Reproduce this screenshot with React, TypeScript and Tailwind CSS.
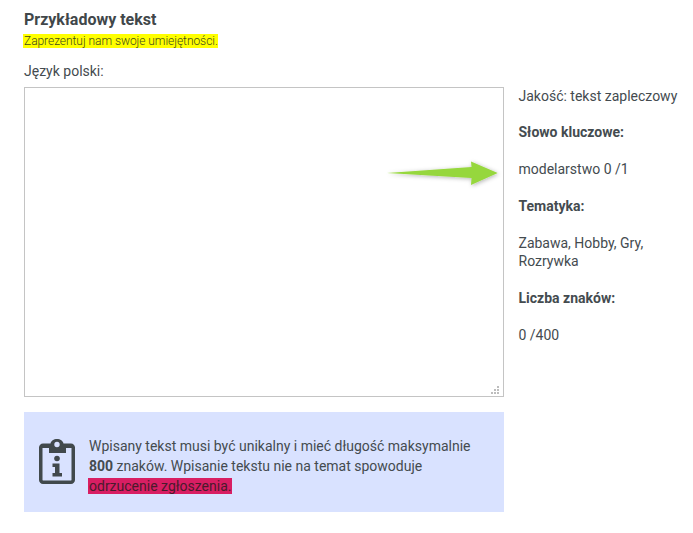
const App = () => {
  return (
    <div className="min-h-screen bg-white pl-6 pt-3 font-['Roboto',sans-serif] text-sm text-[#444b4f]">
      <h2 className="text-base leading-[16px] font-bold text-[#41474a]">Przykładowy tekst</h2>
      <div className="mt-[5px] leading-[14px]">
        <span className="-ml-px inline-block bg-[#ffff00] pl-px text-xs leading-[14px] font-light tracking-[-0.05px] text-[#3f4a1c]">
          Zaprezentuj nam swoje umiejętności.
        </span>
      </div>

      <div className="mt-[13px] leading-[20px]">Język polski:</div>

      <div className="mt-[6px] flex">
        <div className="relative h-[310px] w-[480px] shrink-0">
          <textarea className="block h-full w-full resize-none border border-[#c4c4c4] bg-white outline-none" />
          {/* uchwyt zmiany rozmiaru */}
          <svg className="absolute right-[4px] bottom-[2px]" width="10" height="10" viewBox="0 0 10 10" fill="#bdbdbd">
            <rect x="7" y="1" width="2" height="2" />
            <rect x="4" y="4" width="2" height="2" />
            <rect x="7" y="4" width="2" height="2" />
            <rect x="1" y="7" width="2" height="2" />
            <rect x="4" y="7" width="2" height="2" />
            <rect x="7" y="7" width="2" height="2" />
          </svg>
          {/* zielona strzałka */}
          <svg className="absolute top-[70px] left-[360px] overflow-visible" width="116" height="32" viewBox="0 0 116 32">
            <defs>
              <filter id="arrowShadow" x="-10%" y="-40%" width="120%" height="180%">
                <feDropShadow dx="1" dy="1" stdDeviation="2" floodColor="#000000" floodOpacity="0.3" />
              </filter>
            </defs>
            <path d="M3 16 L87.500 10 L87 4.500 L113.700 16 L87 28 L87.500 21 Z" fill="#96d73c" filter="url(#arrowShadow)" />
          </svg>
        </div>

        <div className="ml-[14.500px] whitespace-nowrap leading-[18px]">
          <p>Jakość: tekst zapleczowy</p>
          <p className="mt-[18px] font-bold">Słowo kluczowe:</p>
          <p className="mt-[19px]">modelarstwo 0 /1</p>
          <p className="mt-[19px] font-bold">Tematyka:</p>
          <p className="mt-[19px]">
            Zabawa, Hobby, Gry,
            <br />
            Rozrywka
          </p>
          <p className="mt-[19px] font-bold">Liczba znaków:</p>
          <p className="mt-[19px]">0 /400</p>
        </div>
      </div>

      <div className="mt-[15px] flex h-[100px] w-[480px] items-center bg-[#d9e2ff] pl-[15px]">
        <svg className="shrink-0" width="36" height="46" viewBox="0 0 36 46">
          <path
            fillRule="evenodd"
            fill="#41494c"
            d="M4 4.500H11.500C12 2 14.700 0 18 0S24 2 24.500 4.500H32C34.200 4.500 36 6.300 36 8.500V41C36 43.200 34.200 45 32 45H4C1.800 45 0 43.200 0 41V8.500C0 6.300 1.800 4.500 4 4.500ZM18 2.800A2.700 2.700 0 1 0 18 8.200A2.700 2.700 0 1 0 18 2.800ZM3.500 9V41C3.500 41.300 3.700 41.500 4 41.500H32C32.300 41.500 32.500 41.300 32.500 41V9H27V14H10V9Z"
          />
          <circle cx="18" cy="19.500" r="2.800" fill="#41494c" />
          <path fill="#41494c" d="M13.500 24.500H20.500V34H23V37.500H13.500V34H16V28H13.500Z" />
        </svg>
        <p className="ml-[14px] w-[400px] pt-2 leading-[20px]">
          Wpisany tekst musi być unikalny i mieć długość maksymalnie <b>800</b> znaków. Wpisanie tekstu nie na temat spowoduje{" "}
          <span className="-mx-px bg-[#d81e63] px-px text-[#4a1a2c]">odrzucenie zgłoszenia.</span>
        </p>
      </div>
    </div>
  );
};

export default App;
